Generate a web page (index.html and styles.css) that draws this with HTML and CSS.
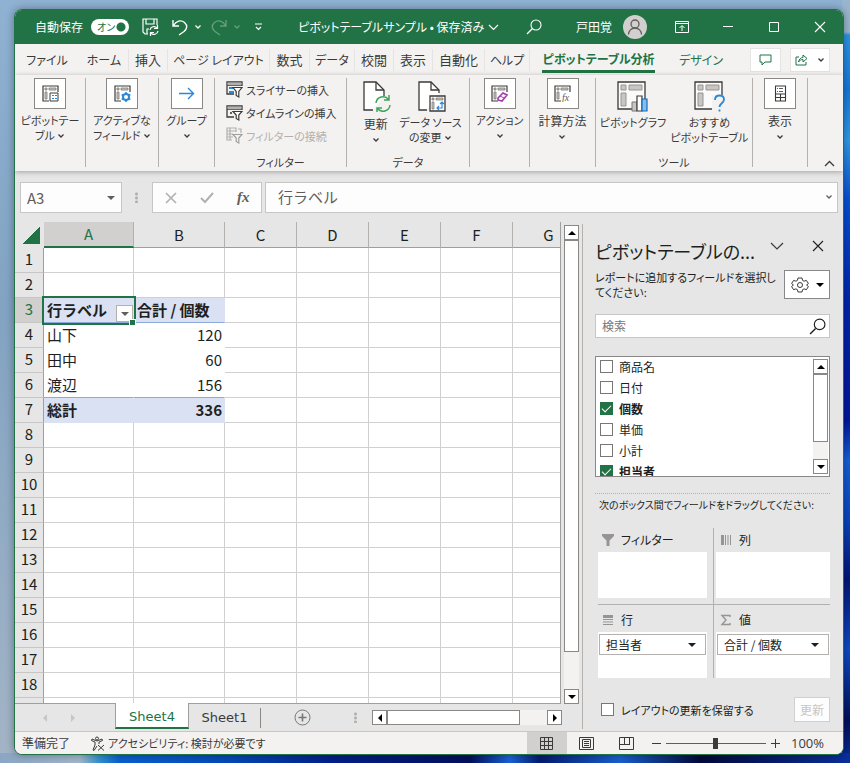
FILE: index.html
```
<!DOCTYPE html>
<html lang="ja">
<head>
    <meta charset="UTF-8">
    <meta name="viewport" content="width=device-width, initial-scale=1.0">
    <title>ピボットテーブルサンプル</title>
    <link rel="stylesheet" href="styles.css">
</head>
<body>

<!-- Shared icons -->
<svg class="icon-defs" width="0" height="0" aria-hidden="true">
    <symbol id="chev" viewBox="0 0 8 8"><path d="M1.500 2.500 4 5l2.500-2.500" fill="none" stroke="currentColor" stroke-width="1.300"/></symbol>
    <symbol id="tri-down" viewBox="0 0 8 8"><path d="M0 2h8L4 6z" fill="currentColor"/></symbol>
    <symbol id="tri-up" viewBox="0 0 8 8"><path d="M0 6h8L4 2z" fill="currentColor"/></symbol>
    <symbol id="tri-left" viewBox="0 0 8 8"><path d="M6 0v8L2 4z" fill="currentColor"/></symbol>
    <symbol id="tri-right" viewBox="0 0 8 8"><path d="M2 0v8l4-4z" fill="currentColor"/></symbol>
    <symbol id="lens" viewBox="0 0 16 16"><path d="M6.200 9.800 1 15" fill="none" stroke="currentColor" stroke-width="1.300"/><circle cx="10" cy="6" r="5" fill="none" stroke="currentColor" stroke-width="1.100"/></symbol>
    <symbol id="close" viewBox="0 0 12 12"><path d="M1 1l10 10M11 1 1 11" fill="none" stroke="currentColor" stroke-width="1.100"/></symbol>
    <symbol id="pivot-small" viewBox="0 0 17 17"><path d="M16 7V1H1v15h6" fill="none" stroke="#3b3a39" stroke-width="1.200"/><path d="M3 3h2v2H3zM7 3h7v2H7zM3 7h2v7H3z" fill="#c8c6c4" stroke="#797775" stroke-width=".8"/></symbol>
    <symbol id="pivot-big" viewBox="0 0 31 31"><path d="M1 1h27v27H1z" fill="#fafafa" stroke="#3b3a39" stroke-width="1.300"/><path d="M4 4h5v5H4zM12 4h13v5H12zM4 12h5v13H4z" fill="#c8c6c4" stroke="#979593"/></symbol>
</svg>

<div class="window">
    <!-- Title bar -->
    <header class="titlebar">
        <div class="quick">
            <label for="autosave">自動保存</label>
            <span class="toggle"><input type="checkbox" id="autosave" role="switch" checked><span class="toggle-text">オン</span></span>
            <button class="save" aria-label="保存"><svg width="17" height="18" viewBox="0 0 17 18" fill="none" stroke="#fff" stroke-width="1.200"><path d="M6 16H3L1 14V1h14v6M4 1v5h8V1M5 16v-5h2"/><path d="M8 12a4 4 0 0 1 7-2M15.500 7v3.500H12M16 13a4 4 0 0 1-7 2M8.500 18v-3.500H12"/></svg></button>
            <button aria-label="元に戻す"><svg width="16" height="17" viewBox="0 0 16 17" fill="none" stroke="#fff" stroke-width="1.400"><path d="M1 1v6h6M1.500 6.500C4 2 9 .5 12.500 3.500S15 10 12 12.500L7 16"/></svg><svg class="c8"><use href="#chev"/></svg></button>
            <button class="dim" aria-label="やり直し"><svg width="16" height="17" viewBox="0 0 16 17" fill="none" stroke="#fff" stroke-width="1.400"><path d="M15 1v6H9M14.500 6.500C12 2 7 .5 3.500 3.500S1 10 4 12.500L9 16"/></svg><svg class="c8"><use href="#chev"/></svg></button>
            <button class="custom" aria-label="カスタマイズ"><svg width="9" height="8" viewBox="0 0 9 8" fill="none" stroke="#fff" stroke-width="1.200"><path d="M1 1h7M2 4l2.500 2.500L7 4"/></svg></button>
        </div>
        <button class="doc-title">ピボットテーブルサンプル • 保存済み <svg width="11" height="7" viewBox="0 0 11 7"><path d="M1 1l4.500 4.500L10 1" fill="none" stroke="#fff" stroke-width="1.200"/></svg></button>
        <div class="account">
            <button aria-label="検索"><svg width="16" height="16"><use href="#lens"/></svg></button>
            <span class="user">戸田覚</span>
            <svg width="24" height="24" viewBox="0 0 24 24"><circle cx="12" cy="12" r="12" fill="#d2d0ce"/><g fill="none" stroke="#605e5c" stroke-width="1.300"><circle cx="12" cy="9" r="4"/><path d="M5.500 19.500a6.500 6.500 0 0 1 13 0"/></g></svg>
        </div>
        <div class="win-buttons">
            <button aria-label="リボンの表示オプション"><svg width="14" height="12" viewBox="0 0 14 12" fill="none" stroke="#fff"><path d="M.5.500h13v11H.5zM.5 2.500h13M7 10V5M4.500 7 7 4.500 9.500 7"/></svg></button>
            <button aria-label="最小化"><svg width="10" height="10" viewBox="0 0 10 10"><path d="M0 4.500h10" stroke="#fff"/></svg></button>
            <button aria-label="最大化"><svg width="10" height="10" viewBox="0 0 10 10"><path d="M.5.500h9v9h-9z" fill="none" stroke="#fff"/></svg></button>
            <button aria-label="閉じる"><svg width="12" height="12"><use href="#close"/></svg></button>
        </div>
    </header>

    <!-- Ribbon tabs -->
    <nav class="tabs">
        <button class="plain kana">ファイル</button>
        <button class="kana">ホーム</button>
        <button>挿入</button>
        <button class="kana">ページ レイアウト</button>
        <button>数式</button>
        <button class="kana">データ</button>
        <button>校閲</button>
        <button>表示</button>
        <button>自動化</button>
        <button class="kana">ヘルプ</button>
        <button class="active plain kana"><span>ピボットテーブル分析</span></button>
        <button class="green plain kana">デザイン</button>
        <div class="tab-actions">
            <button aria-label="コメント"><svg width="13" height="12" viewBox="0 0 13 12"><path d="M1 1h11v7H6l-3 3V8H1z" fill="none" stroke="#217346"/></svg></button>
            <button aria-label="共有"><svg width="13" height="13" viewBox="0 0 13 13" fill="none" stroke="#217346"><path d="M4 4H1v8h10V9"/><path d="M3.500 9C4 6 6 4.500 8 4.500V2l4 3.500L8 9V6.500C6 6.500 4.500 7.500 3.500 9z"/></svg><svg class="c8"><use href="#chev"/></svg></button>
        </div>
    </nav>

    <!-- Ribbon -->
    <div class="ribbon">
        <div class="group">
            <button class="tool kana">
                <span class="box"><svg width="17" height="17" viewBox="0 0 17 17"><use href="#pivot-small" width="17" height="17"/><path d="M8 8h8v8H8z" fill="#fff" stroke="#3b3a39"/><path d="M10 10h2v1h-2zM13 10h2v1h-2zM10 13h2v1h-2zM13 13h2v1h-2z" fill="#2b88d8"/></svg></span>
                <span>ピボットテー<br>ブル <svg class="c8"><use href="#chev"/></svg></span>
            </button>
        </div>
        <div class="group">
            <button class="tool kana">
                <span class="box"><svg width="17" height="17" viewBox="0 0 17 17"><use href="#pivot-small" width="17" height="17"/><circle cx="12" cy="12" r="3" fill="#fff" stroke="#2b88d8" stroke-width="2"/><path d="M12 7v2M12 15v2M7.700 9.500l1.700 1M14.600 13.500l1.700 1M7.700 14.500l1.700-1M14.600 10.500l1.700-1" stroke="#2b88d8" stroke-width="1.600"/></svg></span>
                <span>アクティブな<br>フィールド <svg class="c8"><use href="#chev"/></svg></span>
            </button>
        </div>
        <div class="group">
            <button class="tool kana">
                <span class="box"><svg width="17" height="17" viewBox="0 0 17 17"><path d="M1 8.500h14M10 3l5.500 5.500L10 14" fill="none" stroke="#2b88d8" stroke-width="1.400"/></svg></span>
                <span>グループ<br><svg class="c8"><use href="#chev"/></svg></span>
            </button>
        </div>
        <div class="group">
            <div class="rows">
                <button><svg width="17" height="17" viewBox="0 0 17 17"><path d="M8 13H1V1h15v4M1 4h15" fill="none" stroke="#3b3a39" stroke-width="1.300"/><path d="M1.500 1.500h14V4h-14z" fill="#b3b0ad"/><path d="M3 6h4v2H3zM3 10h5v2H3z" fill="#2b88d8"/><path d="M7 6.500h9l-3.200 4V16l-2.600-1.500v-4z" fill="#fff" stroke="#3b3a39" stroke-width="1.200"/></svg>スライサーの挿入</button>
                <button><svg width="17" height="17" viewBox="0 0 17 17"><path d="M8 13H1V2h15v4M1 5h15" fill="none" stroke="#3b3a39" stroke-width="1.300"/><path d="M1.500 2.500h14V5h-14z" fill="#b3b0ad"/><path d="M4 8h2v2H4z" fill="#605e5c"/><path d="M7 7.500h9l-3.200 3.500v5l-2.600-1.500V11z" fill="#fff" stroke="#3b3a39" stroke-width="1.200"/></svg>タイムラインの挿入</button>
                <button disabled><svg width="17" height="17" viewBox="0 0 17 17"><path d="M6 13H1V1h9v4M1 4h9M4 1v12M12 2h3v4M1 7h6M1 10h6" fill="none" stroke="#b3b0ad" stroke-width="1.200"/><path d="M7 7.500h9l-3.200 3.500v5l-2.600-1.500V11z" fill="#f3f2f1" stroke="#a19f9d" stroke-width="1.200"/></svg>フィルターの接続</button>
            </div>
            <div class="group-name">フィルター</div>
        </div>
        <div class="group">
            <div class="pair data-pair">
                <button class="tool big">
                    <svg width="31" height="31" viewBox="0 0 31 31"><path d="M13 29H4V1h12l8 8v6" fill="#fff" stroke="#3b3a39" stroke-width="1.300"/><path d="M16 1v8h8" fill="none" stroke="#3b3a39" stroke-width="1.300"/><path d="M16 22a7 7 0 0 1 12.500-3.500M29 14v5h-5M30 24a7 7 0 0 1-12.500 3.500M17 32v-5h5" fill="none" stroke="#3fa45b" stroke-width="1.500"/></svg>
                    <span>更新<br><svg class="c8"><use href="#chev"/></svg></span>
                </button>
                <button class="tool big kana">
                    <svg width="31" height="31" viewBox="0 0 31 31"><path d="M12 29H4V1h12l8 8v3" fill="#fff" stroke="#3b3a39" stroke-width="1.300"/><path d="M16 1v8h8" fill="none" stroke="#3b3a39" stroke-width="1.300"/><path d="M15 15h15v15H15z" fill="#fff" stroke="#3b3a39" stroke-width="1.300"/><path d="M17 17h2v2h-2zM21 17h7v2h-7zM17 21h2v7h-2z" fill="#c8c6c4" stroke="#605e5c" stroke-width=".6"/><path d="M22 27h5v-6M24 25l-2 2 2 2M25 23l2-2 2 2" fill="none" stroke="#2b88d8" stroke-width="1.200"/></svg>
                    <span>データ ソース<br>の変更 <svg class="c8"><use href="#chev"/></svg></span>
                </button>
            </div>
            <div class="group-name">データ</div>
        </div>
        <div class="group">
            <button class="tool kana">
                <span class="box"><svg width="17" height="17" viewBox="0 0 17 17"><use href="#pivot-small" width="17" height="17"/><path d="M7 13l5-5 4 2-5 6-4-1z" fill="#fff" stroke="#a33ab0" stroke-width="1.600"/><path d="M9 11l4 2" stroke="#a33ab0"/></svg></span>
                <span>アクション<br><svg class="c8"><use href="#chev"/></svg></span>
            </button>
        </div>
        <div class="group">
            <button class="tool">
                <span class="box"><svg width="17" height="17" viewBox="0 0 17 17"><use href="#pivot-small" width="17" height="17"/><text x="8" y="16" class="fx-icon">fx</text></svg></span>
                <span>計算方法<br><svg class="c8"><use href="#chev"/></svg></span>
            </button>
        </div>
        <div class="group">
            <div class="pair">
                <button class="tool big kana">
                    <svg width="31" height="31" viewBox="0 0 31 31"><use href="#pivot-big" width="31" height="31"/><path d="M15 21h5v9h-5z" fill="#c8c6c4" stroke="#797775"/><path d="M20 15h5v15h-5z" fill="#fff" stroke="#3b3a39" stroke-width="1.200"/><path d="M25 18h5v12h-5z" fill="#83beec" stroke="#0f6cbd" stroke-width="1.200"/></svg>
                    <span>ピボットグラフ</span>
                </button>
                <button class="tool big kana">
                    <svg width="31" height="31" viewBox="0 0 31 31"><use href="#pivot-big" width="31" height="31"/><path d="M18 14h13v17H18z" fill="#f3f2f1"/><path d="M21 19c0-3 2-4.500 4.500-4.500S30 16 30 18.500c0 3.500-4.500 4-4.500 7.500M25.500 28.500v2" fill="none" stroke="#2b88d8" stroke-width="1.800"/></svg>
                    <span>おすすめ<br>ピボットテーブル</span>
                </button>
            </div>
            <div class="group-name">ツール</div>
        </div>
        <div class="group">
            <button class="tool">
                <span class="box"><svg width="17" height="17" viewBox="0 0 17 17"><path d="M3.500 1h10v15h-10zM3.500 9h10M3.500 12.500h10M8.500 9v7" fill="#fff" stroke="#3b3a39" stroke-width="1.100"/><path d="M5 3.500h1M7 3.500h4M5 6.500h1M7 6.500h4" stroke="#605e5c"/></svg></span>
                <span>表示<br><svg class="c8"><use href="#chev"/></svg></span>
            </button>
        </div>
        <button class="collapse" aria-label="リボンを折りたたむ"><svg width="11" height="7" viewBox="0 0 11 7"><path d="M1 6l4.500-4.500L10 6" fill="none" stroke="#3b3a39" stroke-width="1.300"/></svg></button>
    </div>

    <!-- Formula bar -->
    <div class="formula">
        <div class="name-box"><input type="text" value="A3" aria-label="名前ボックス"><button aria-label="名前の一覧"><svg class="c8"><use href="#tri-down"/></svg></button></div>
        <span class="dots"></span>
        <div class="fx-buttons">
            <button aria-label="キャンセル"><svg width="12" height="12" viewBox="0 0 12 12"><path d="M1 1l10 10M11 1 1 11" stroke="#b3b0ad" stroke-width="1.600"/></svg></button>
            <button aria-label="入力"><svg width="14" height="12" viewBox="0 0 14 12"><path d="M1 6l4 4 8-9" fill="none" stroke="#b3b0ad" stroke-width="2"/></svg></button>
            <button class="fx" aria-label="関数の挿入">fx</button>
        </div>
        <div class="formula-input"><input type="text" value="行ラベル" aria-label="数式バー"><button aria-label="数式バーの展開"><svg class="c8"><use href="#chev"/></svg></button></div>
    </div>

    <div class="main">
        <div class="sheet-area">
            <div class="sheet-row">
                <div class="sheet">
                    <table>
                        <colgroup><col class="w-num"><col class="w-a"><col class="w-b"><col><col><col><col><col></colgroup>
                        <thead>
                            <tr><th class="corner"></th><th class="sel">A</th><th>B</th><th>C</th><th>D</th><th>E</th><th>F</th><th>G</th></tr>
                        </thead>
                        <tbody>
                            <tr><th>1</th><td></td><td></td><td></td><td></td><td></td><td></td><td></td></tr>
                            <tr><th>2</th><td></td><td></td><td></td><td></td><td></td><td></td><td></td></tr>
                            <tr class="pt-head"><th class="sel">3</th><td class="cursor">行ラベル<button class="filter-btn" aria-label="行ラベルのフィルター"><svg class="c8"><use href="#tri-down"/></svg></button></td><td>合計 / 個数</td><td></td><td></td><td></td><td></td><td></td></tr>
                            <tr class="pt"><th>4</th><td>山下</td><td class="num">120</td><td></td><td></td><td></td><td></td><td></td></tr>
                            <tr class="pt"><th>5</th><td>田中</td><td class="num">60</td><td></td><td></td><td></td><td></td><td></td></tr>
                            <tr class="pt last"><th>6</th><td>渡辺</td><td class="num">156</td><td></td><td></td><td></td><td></td><td></td></tr>
                            <tr class="pt-total"><th>7</th><td>総計</td><td class="num">336</td><td></td><td></td><td></td><td></td><td></td></tr>
                            <tr><th>8</th><td></td><td></td><td></td><td></td><td></td><td></td><td></td></tr>
                            <tr><th>9</th><td></td><td></td><td></td><td></td><td></td><td></td><td></td></tr>
                            <tr><th>10</th><td></td><td></td><td></td><td></td><td></td><td></td><td></td></tr>
                            <tr><th>11</th><td></td><td></td><td></td><td></td><td></td><td></td><td></td></tr>
                            <tr><th>12</th><td></td><td></td><td></td><td></td><td></td><td></td><td></td></tr>
                            <tr><th>13</th><td></td><td></td><td></td><td></td><td></td><td></td><td></td></tr>
                            <tr><th>14</th><td></td><td></td><td></td><td></td><td></td><td></td><td></td></tr>
                            <tr><th>15</th><td></td><td></td><td></td><td></td><td></td><td></td><td></td></tr>
                            <tr><th>16</th><td></td><td></td><td></td><td></td><td></td><td></td><td></td></tr>
                            <tr><th>17</th><td></td><td></td><td></td><td></td><td></td><td></td><td></td></tr>
                            <tr><th>18</th><td></td><td></td><td></td><td></td><td></td><td></td><td></td></tr>
                            <tr><th></th><td></td><td></td><td></td><td></td><td></td><td></td><td></td></tr>
                        </tbody>
                    </table>
                </div>
                <div class="vscroll">
                    <button aria-label="上へ"><svg class="c8"><use href="#tri-up"/></svg></button>
                    <div class="thumb"></div>
                    <button aria-label="下へ"><svg class="c8"><use href="#tri-down"/></svg></button>
                </div>
            </div>
            <div class="sheet-tabs">
                <div class="sheet-nav"><button aria-label="前のシート"><svg class="c8"><use href="#tri-left"/></svg></button><button aria-label="次のシート"><svg class="c8"><use href="#tri-right"/></svg></button></div>
                <button class="sheet-tab current">Sheet4</button>
                <button class="sheet-tab">Sheet1</button>
                <button class="add" aria-label="新しいシート"><svg width="17" height="17" viewBox="0 0 17 17"><circle cx="8.500" cy="8.500" r="7.500" fill="none" stroke="#797775"/><path d="M8.500 4.500v8M4.500 8.500h8" stroke="#797775" stroke-width="1.600"/></svg></button>
                <span class="dots"></span>
                <div class="hscroll">
                    <button aria-label="左へ"><svg class="c8"><use href="#tri-left"/></svg></button>
                    <div class="thumb"></div>
                    <button aria-label="右へ"><svg class="c8"><use href="#tri-right"/></svg></button>
                </div>
            </div>
        </div>

        <!-- Field list -->
        <aside class="pane">
            <div class="pane-head">
                <h2>ピボットテーブルの...</h2>
                <button aria-label="オプション"><svg width="14" height="8" viewBox="0 0 14 8"><path d="M1 1l6 6 6-6" fill="none" stroke="#3b3a39" stroke-width="1.200"/></svg></button>
                <button aria-label="閉じる"><svg width="12" height="12"><use href="#close"/></svg></button>
            </div>
            <div class="pane-desc">
                <p>レポートに追加するフィールドを選択し<br>てください:</p>
                <button class="gear" aria-label="ツール"><svg width="18" height="18" viewBox="0 0 18 18" fill="none" stroke="#3b3a39"><path d="M7 2h4l.6 2.400 1.500.8 2.300-.8 2 3.200L15.600 9l1.800 1.500-2 3.200-2.300-.8-1.500.8L11 16H7l-.6-2.300-1.500-.8-2.300.8-2-3.200L2.400 9 .6 7.600l2-3.200 2.300.8 1.500-.8z"/><circle cx="9" cy="9" r="2.500"/></svg><svg class="c8"><use href="#tri-down"/></svg></button>
            </div>
            <div class="search"><input type="search" placeholder="検索" aria-label="検索"><svg width="17" height="17"><use href="#lens"/></svg></div>

            <div class="fields">
                <div class="field-list">
                    <label><input type="checkbox">商品名</label>
                    <label><input type="checkbox">日付</label>
                    <label><input type="checkbox" checked>個数</label>
                    <label><input type="checkbox">単価</label>
                    <label><input type="checkbox">小計</label>
                    <label><input type="checkbox" checked>担当者</label>
                </div>
                <div class="vscroll">
                    <button aria-label="上へ"><svg class="c8"><use href="#tri-up"/></svg></button>
                    <div class="thumb"></div>
                    <button aria-label="下へ"><svg class="c8"><use href="#tri-down"/></svg></button>
                </div>
            </div>

            <p class="drag-hint">次のボックス間でフィールドをドラッグしてください:</p>
            <div class="areas">
                <section>
                    <h3><svg width="12" height="12" viewBox="0 0 12 12"><path d="M0 0h12v2L7.500 6.500V12h-3V6.500L0 2z" fill="#979593"/></svg>フィルター</h3>
                    <div class="drop"></div>
                </section>
                <section>
                    <h3><svg width="12" height="12" viewBox="0 0 12 12"><path d="M1 1h3v10H1z" fill="#979593"/><path d="M5.500 1v10M8 1v10M10.500 1v10" stroke="#979593"/></svg>列</h3>
                    <div class="drop"></div>
                </section>
                <section>
                    <h3><svg width="12" height="12" viewBox="0 0 12 12"><path d="M1 1h10v3H1z" fill="#979593"/><path d="M1 5.500h10M1 8h10M1 10.500h10" stroke="#979593"/></svg>行</h3>
                    <div class="drop"><button>担当者<svg class="c8"><use href="#tri-down"/></svg></button></div>
                </section>
                <section>
                    <h3><svg width="12" height="12" viewBox="0 0 12 12"><path d="M10 3V1.500H2L6 6l-4 4.500h8V9" fill="none" stroke="#979593" stroke-width="1.400"/></svg>値</h3>
                    <div class="drop"><button>合計 / 個数<svg class="c8"><use href="#tri-down"/></svg></button></div>
                </section>
            </div>
            <div class="pane-foot">
                <label><input type="checkbox">レイアウトの更新を保留する</label>
                <button disabled>更新</button>
            </div>
        </aside>
    </div>

    <!-- Status bar -->
    <footer class="status">
        <span class="ready">準備完了</span>
        <button class="a11y kana"><svg width="15" height="15" viewBox="0 0 15 15" fill="none" stroke="#3b3a39"><circle cx="7" cy="2.500" r="1.500"/><path d="M1.500 4.500 5 6v3l-2 5M12.500 4.500 9 6v2M1.500 4.500l.5-1.500 5 2 5-2 .5 1.500M3 14l1 .5L7 10M8 9l6 5.500M14 9l-6 5.500"/></svg>アクセシビリティ: 検討が必要です</button>
        <div class="views">
            <button class="on" aria-label="標準"><svg width="13" height="13" viewBox="0 0 13 13"><path d="M.5.500h12v12H.5zM4.500 0v13M8.500 0v13M0 4.500h13M0 8.500h13" fill="none" stroke="#3b3a39"/></svg></button>
            <button aria-label="ページ レイアウト"><svg width="15" height="13" viewBox="0 0 15 13"><path d="M.5.500h14v12H.5zM3.500 2.500h8v8h-8zM5 4.500h5M5 6.500h5M5 8.500h5" fill="none" stroke="#3b3a39"/></svg></button>
            <button aria-label="改ページ プレビュー"><svg width="15" height="13" viewBox="0 0 15 13"><path d="M.5.500h14v12H.5zM5.500 0v7M10.500 0v7M0 7.500h11" fill="none" stroke="#3b3a39"/></svg></button>
        </div>
        <div class="zoom">
            <button aria-label="縮小"><svg width="9" height="9" viewBox="0 0 9 9"><path d="M0 4.500h9" stroke="#3b3a39"/></svg></button>
            <input type="range" min="0" max="100" value="50" aria-label="ズーム">
            <button aria-label="拡大"><svg width="9" height="9" viewBox="0 0 9 9"><path d="M0 4.500h9M4.500 0v9" stroke="#3b3a39"/></svg></button>
            <span>100%</span>
        </div>
    </footer>
</div>

</body>
</html>
```

FILE: styles.css
```
* {
    box-sizing: border-box;
}
body {
    margin: 0;
    padding: 9px 6px 8px 14px;
    height: 100vh;
    font-family: "Noto Sans CJK JP", sans-serif;
    font-feature-settings: "palt";
    font-size: 12px;
    line-height: 16px;
    color: #3b3a39;
    background:
        linear-gradient(90deg, #8aa6c4 0, #a3b6cc 80px, #2f8fd0 100px, #0a5fd0 120px, #0648b8 230px, #03208a 330px, #020f5c 470px, #1b62d8 510px, #041a70 540px, #1a5fd0 620px, #02093a 700px, #0a2f9c 100%) 0 100% / 100% 10px no-repeat,
        linear-gradient(180deg, #9ab6cf 0, #9ab6cf 32px, #2b95e6 35px, #1778dc 90px, #2f9ae8 140px, #0550d8 200px, #0325b0 300px, #0216a0 420px, #1460dc 460px, #0a45c0 520px, #03157a 580px, #0c4bc8 650px, #020f5c 720px, #0a2f9c 100%) 100% 0 / 8px 100% no-repeat,
        linear-gradient(180deg, #8fb2d3, #82a3c2 40%, #a3b4c6);
}
button, input {
    font: inherit;
    font-feature-settings: inherit;
    color: inherit;
}
button {
    border: none;
    background: none;
    padding: 0;
    display: flex;
    align-items: center;
    justify-content: center;
    white-space: nowrap;
}
h2, h3, p {
    margin: 0;
    font-weight: normal;
}
svg {
    flex: none;
}
.icon-defs {
    position: absolute;
}
.c8 {
    width: 8px;
    height: 8px;
}
.kana {
    font-size: 11px;
}
.window {
    height: 100%;
    display: flex;
    flex-direction: column;
    background-color: #e6e6e6;
    border: 1px solid #217346;
    border-radius: 8px;
    overflow: hidden;
    box-shadow: 0 0 8px rgba(0, 0, 0, 0.35);
}

/* Title bar */
.titlebar {
    height: 34px;
    flex: none;
    display: flex;
    align-items: center;
    background-color: #217346;
    color: white;
}
.quick {
    width: 283px;
    padding-left: 20px;
    display: flex;
    align-items: center;
}
.toggle {
    position: relative;
    margin: 0 13px 0 8px;
    display: flex;
}
.toggle input {
    appearance: none;
    margin: 0;
    width: 38px;
    height: 16px;
    border-radius: 8px;
    background: radial-gradient(circle at 30px 8px, #217346 4px, white 5px);
}
.toggle-text {
    position: absolute;
    left: 6px;
    font-size: 10px;
    color: #217346;
}
.quick button {
    gap: 6px;
    margin-right: 9px;
}
.quick .save {
    margin-right: 13px;
}
.quick .custom {
    margin: 0 0 0 4px;
}
.dim {
    opacity: 0.3;
}
.doc-title {
    gap: 4px;
}
.account {
    margin-left: auto;
    display: flex;
    align-items: center;
}
.user {
    margin: 0 11px 0 34px;
}
.win-buttons {
    display: flex;
    margin-left: 12px;
}
.win-buttons button {
    width: 46px;
    height: 34px;
}

/* Tabs */
.tabs {
    flex: none;
    height: 31px;
    display: grid;
    grid-template-columns: 65px 49px 39px 102px 40px 45px 39px 39px 52px 45px 138px 67px 1fr;
    align-items: center;
    background-color: #f3f2f1;
    font-size: 13px;
}
.tabs > button {
    height: 22px;
    border-right: 1px solid #e6e4e2;
}
.tabs .kana {
    font-size: 12px;
}
.tabs .plain {
    border-color: transparent;
}
.tabs .green, .tabs .active {
    color: #217346;
}
.tabs .active {
    font-weight: bold;
}
.active span {
    line-height: 22px;
    padding-top: 2px;
    border-bottom: 3px solid #217346;
}
.tab-actions {
    display: flex;
    justify-content: flex-end;
    gap: 9px;
    padding-right: 13px;
}
.tab-actions button {
    width: 31px;
    height: 24px;
    background-color: white;
    border: 1px solid #e6e4e2;
}
.tab-actions button + button {
    width: 40px;
    gap: 9px;
}

/* Ribbon */
.ribbon {
    flex: none;
    height: 96px;
    padding: 3px 0 4px;
    display: grid;
    grid-template-columns: 71px 73px 56px 132px 123px 60px 66px 157px 55px 1fr;
    background-color: #f3f2f1;
    box-shadow: 0 1px 5px rgba(0, 0, 0, 0.3);
}
.group {
    display: flex;
    flex-direction: column;
    border-right: 1px solid #b3b0ad;
}
.tool {
    flex-direction: column;
    gap: 4px;
}
.tool > span:last-child {
    line-height: 15px;
}
.box {
    width: 32px;
    height: 31px;
    display: flex;
    align-items: center;
    justify-content: center;
    background-color: white;
    border: 1px solid #8a8886;
}
.big {
    padding-top: 3px;
    justify-content: flex-start;
}
.big.kana {
    gap: 3px;
}
.pair {
    display: flex;
    justify-content: center;
    gap: 4px;
}
.data-pair {
    gap: 8px;
    padding-left: 6px;
}
.rows {
    padding-left: 11px;
    display: flex;
    flex-direction: column;
    align-items: flex-start;
    font-size: 11px;
}
.rows button {
    height: 23px;
    gap: 3px;
}
.rows button:disabled {
    color: #b3b0ad;
}
.group-name {
    margin-top: auto;
    font-size: 11px;
    line-height: 10px;
    text-align: center;
}
.fx-icon {
    font: italic 10px "Liberation Serif", serif;
    fill: #605e5c;
}
.collapse {
    align-items: flex-end;
    justify-content: flex-end;
    padding-right: 8px;
}

/* Formula bar */
.formula {
    flex: none;
    display: flex;
    align-items: center;
    padding: 11px 5px 9px;
    font-size: 15px;
    font-feature-settings: normal;
    color: #605e5c;
}
.formula > div {
    height: 31px;
    display: flex;
    align-items: center;
    background-color: #fdfdfd;
    border: 1px solid #c8c6c4;
}
.formula input {
    flex: 1;
    min-width: 0;
    border: none;
    background: none;
    padding: 0;
}
.name-box {
    width: 102px;
    padding: 0 6px;
}
.dots {
    width: 3px;
    height: 11px;
    background: radial-gradient(circle, #b3b0ad 1px, transparent 2px) 0 0 / 3px 4px;
}
.formula .dots {
    margin: 0 14px 0 13px;
}
.fx-buttons {
    width: 110px;
    justify-content: space-around;
}
.fx {
    font: italic bold 15px "Liberation Serif", serif;
}
.formula-input {
    flex: 1;
    margin-left: 3px;
    padding: 0 4px 2px 12px;
}

/* Sheet */
.main {
    flex: 1;
    min-height: 0;
    display: flex;
}
.sheet-area {
    flex: 1;
    min-width: 0;
    display: flex;
    flex-direction: column;
}
.sheet-row {
    flex: 1;
    min-height: 0;
    display: flex;
    gap: 3px;
    padding-right: 3px;
}
.sheet {
    flex: 1;
    overflow: hidden;
    border-right: 1px solid #a19f9d;
    border-bottom: 1px solid #a19f9d;
}
table {
    width: 570px;
    table-layout: fixed;
    border-collapse: separate;
    border-spacing: 0;
    font-size: 15px;
    line-height: 22px;
    font-feature-settings: normal;
    color: #201f1e;
}
.w-num {
    width: 29px;
}
.w-a {
    width: 90px;
}
.w-b {
    width: 91px;
}
th {
    padding: 0 0 2px;
    height: 25px;
    font-weight: normal;
    background-color: #e6e6e6;
    border-right: 1px solid #a19f9d;
    border-bottom: 1px solid #c8c6c4;
}
thead th {
    padding: 0;
    height: 26px;
    border-right-color: #b3b0ad;
    border-bottom-color: #a19f9d;
}
thead .corner {
    background: linear-gradient(135deg, transparent 50%, #217346 50%) 8px 5px / 17px 17px no-repeat #e6e6e6;
    border-color: #e6e6e6;
}
th.sel {
    background-color: #d2d0ce;
    color: #217346;
}
thead .sel {
    border-bottom: 2px solid #217346;
}
td {
    padding: 0 2px 1px 3px;
    height: 25px;
    background-color: white;
    border-right: 1px solid #d2d0ce;
    border-bottom: 1px solid #d2d0ce;
    white-space: nowrap;
}
.num {
    text-align: right;
}
.pt td:nth-child(-n+3) {
    border-color: white;
}
.pt-head td:nth-child(-n+3), .pt-total td:nth-child(-n+3) {
    background-color: #d9e1f2;
    border-color: #d9e1f2;
    font-weight: bold;
}
.pt-head td:nth-child(-n+3), .pt.last td:nth-child(-n+3) {
    border-bottom-color: #8ea9db;
}
td.cursor {
    position: relative;
    outline: 2px solid #217346;
}
.cursor::after {
    content: "";
    position: absolute;
    right: -3px;
    bottom: -4px;
    width: 5px;
    height: 5px;
    background-color: #217346;
    border: 1px solid white;
    box-sizing: content-box;
}
.filter-btn {
    position: absolute;
    right: 0;
    bottom: 0;
    width: 17px;
    height: 17px;
    background-color: #fdfdfd;
    border: 1px solid #b3b0ad;
    color: #605e5c;
}
.vscroll {
    width: 15px;
    margin-top: 3px;
    display: flex;
    flex-direction: column;
    background-color: #f3f2f1;
    color: black;
}
.vscroll button, .hscroll button {
    width: 15px;
    height: 15px;
    background-color: white;
    border: 1px solid #8a8886;
}
.thumb {
    background-color: white;
    border: 1px solid #8a8886;
}
.vscroll .thumb {
    height: 86%;
    margin-bottom: auto;
}
.sheet-tabs {
    flex: none;
    height: 27px;
    display: flex;
    padding-right: 20px;
    font-family: "DejaVu Sans", sans-serif;
    font-size: 13px;
}
.sheet-nav {
    width: 100px;
    display: flex;
    align-items: center;
    justify-content: center;
    gap: 20px;
    padding-right: 12px;
    color: #c8c6c4;
}
.sheet-tab {
    width: 72px;
    margin: 4px 0 3px;
    border-right: 1px solid #8a8886;
}
.sheet-tab.current {
    width: 74px;
    margin: -1px 0 2px;
    padding-top: 3px;
    color: #217346;
    background-color: white;
    border: 1px solid #a19f9d;
    border-top: none;
    border-bottom: 2px solid #217346;
}
.add {
    width: 82px;
}
.sheet-tabs .dots {
    align-self: center;
    margin-left: 11px;
}
.hscroll {
    flex: 1;
    max-width: 190px;
    margin-left: auto;
    align-self: center;
    display: flex;
    background-color: #f3f2f1;
    color: black;
}
.hscroll .thumb {
    width: 70%;
    margin-right: auto;
}

/* Field list */
.pane {
    width: 261px;
    flex: none;
    margin: 2px 0;
    padding: 13px 13px 7px 12px;
    display: flex;
    flex-direction: column;
    border-left: 1px solid #b3b0ad;
    color: #201f1e;
}
.pane-head {
    display: flex;
    align-items: flex-start;
    padding-right: 5px;
}
.pane-head h2 {
    flex: 1;
    font-size: 18px;
    line-height: 28px;
    white-space: nowrap;
}
.pane-head button {
    width: 14px;
    height: 18px;
}
.pane-head button + button {
    margin-left: 27px;
}
.pane-desc {
    display: flex;
    justify-content: space-between;
    padding-top: 5px;
}
.pane-desc p {
    width: 176px;
    font-size: 11px;
    line-height: 15px;
    white-space: nowrap;
}
.gear {
    width: 46px;
    height: 29px;
    gap: 7px;
    background-color: white;
    border: 1px solid #8a8886;
    color: black;
}
.search {
    margin-top: 14px;
    height: 24px;
    padding: 0 3px 0 6px;
    display: flex;
    align-items: center;
    background-color: white;
    border: 1px solid #c8c6c4;
}
.search input {
    flex: 1;
    min-width: 0;
    border: none;
    padding: 0;
    background: none;
}
.search input::placeholder {
    color: #797775;
}
.fields {
    margin-top: 18px;
    height: 121px;
    padding-right: 1px;
    display: flex;
    background-color: white;
    border: 1px solid #8a8886;
}
.field-list {
    flex: 1;
    overflow: hidden;
}
.field-list label {
    height: 21px;
    display: flex;
    align-items: center;
    gap: 6px;
    padding: 0 0 2px 4px;
}
.field-list label:has(:checked) {
    font-weight: bold;
}
.pane input[type="checkbox"] {
    appearance: none;
    margin: 0;
    width: 13px;
    height: 13px;
    flex: none;
    background-color: white;
    border: 1px solid #797775;
}
.pane input[type="checkbox"]:checked {
    display: flex;
    align-items: center;
    justify-content: center;
    background-color: #217346;
    border-color: #217346;
}
.pane input[type="checkbox"]:checked::before {
    content: "";
    width: 8px;
    height: 4px;
    margin-bottom: 3px;
    border: solid white;
    border-width: 0 0 1px 1px;
    transform: rotate(-45deg);
}
.fields .vscroll {
    margin: 2px 0;
}
.fields .vscroll .thumb {
    height: 68px;
}
.drag-hint {
    margin-top: 16px;
    padding: 3px 0 0 4px;
    border-top: 1px dotted #b3b0ad;
    font-size: 10px;
    line-height: 16px;
    white-space: nowrap;
}
.areas {
    display: grid;
    grid-template-columns: 116px 1fr;
    margin: 15px 0 0 3px;
}
.areas section {
    padding-bottom: 6px;
}
.areas section:nth-child(odd) {
    padding-right: 6px;
    border-right: 1px solid #b3b0ad;
}
.areas section:nth-child(even) {
    padding-left: 2px;
}
.areas section:nth-child(n+3) {
    padding-top: 3px;
    padding-bottom: 0;
    border-top: 1px solid #b3b0ad;
}
.areas h3 {
    display: flex;
    align-items: center;
    gap: 7px;
    padding-left: 4px;
    font-size: 12px;
    line-height: 24px;
}
.drop {
    height: 46px;
    padding: 2px 1px;
    background-color: white;
}
.drop button {
    width: 100%;
    height: 21px;
    justify-content: space-between;
    padding: 0 9px 0 6px;
    border: 1px solid #b3b0ad;
    font-feature-settings: normal;
}
.pane-foot {
    margin-top: auto;
    display: flex;
    align-items: center;
    justify-content: space-between;
}
.pane-foot label {
    display: flex;
    align-items: center;
    gap: 7px;
    padding-left: 6px;
    font-size: 11px;
}
.pane-foot button {
    width: 36px;
    height: 25px;
    background-color: #fdfdfd;
    border: 1px solid #d2d0ce;
    color: #c8c6c4;
}

/* Status bar */
.status {
    flex: none;
    height: 23px;
    display: flex;
    align-items: center;
    padding-left: 7px;
    background-color: #f3f2f1;
    border-top: 1px solid #c8c6c4;
}
.a11y {
    margin-left: 20px;
    gap: 3px;
}
.views {
    display: flex;
    margin-left: auto;
}
.views button {
    width: 40px;
    height: 22px;
}
.views .on {
    background-color: #d2d0ce;
}
.zoom {
    display: flex;
    align-items: center;
    gap: 5px;
    padding: 0 19px 0 5px;
}
.zoom input {
    appearance: none;
    width: 100px;
    height: 11px;
    margin: 0;
    background: linear-gradient(#605e5c, #605e5c) 0 5px / 100% 1px no-repeat;
}
.zoom input::-webkit-slider-thumb {
    appearance: none;
    width: 5px;
    height: 11px;
    background-color: #3b3a39;
}
.zoom span {
    margin-left: 6px;
    font-family: "Open Sans", sans-serif;
    font-size: 13px;
}
```
